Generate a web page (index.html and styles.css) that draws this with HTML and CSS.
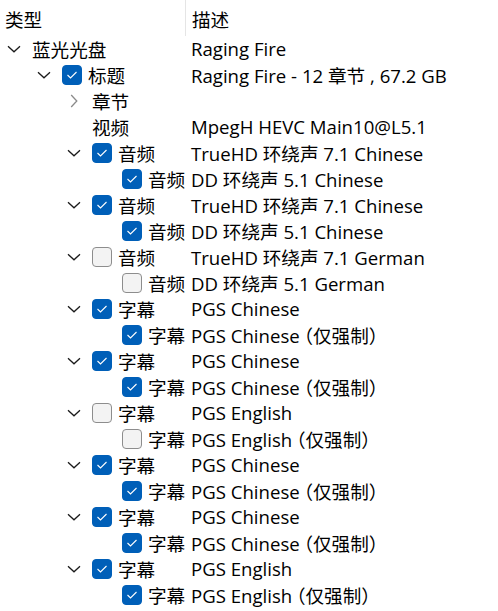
FILE: index.html
```html
<!DOCTYPE html>
<html lang="zh-CN">
<head>
<meta charset="utf-8">
<title>Tree</title>
<link rel="stylesheet" href="styles.css">
</head>
<body>
<div class="tree">
  <div class="header">
    <div class="col-type">类型</div>
    <div class="col-desc">描述</div>
  </div>

  <div class="row l0">
    <div class="col-type"><span class="exp"><svg width="14" height="8" viewBox="0 0 14 8"><path d="M1 1.2 L7 6.8 L13 1.2" fill="none" stroke="#1b1b1b" stroke-width="1.3"/></svg></span><span class="label">蓝光光盘</span></div>
    <div class="col-desc">Raging Fire</div>
  </div>

  <div class="row l1">
    <div class="col-type"><span class="exp"><svg width="14" height="8" viewBox="0 0 14 8"><path d="M1 1.2 L7 6.8 L13 1.2" fill="none" stroke="#1b1b1b" stroke-width="1.3"/></svg></span><span class="cb on"><svg width="12" height="10" viewBox="0 0 12 10"><path d="M1.5 5 L4.5 8 L10.5 2" fill="none" stroke="#fff" stroke-width="1.1"/></svg></span><span class="label">标题</span></div>
    <div class="col-desc">Raging Fire - 12 章节 , 67.2 GB</div>
  </div>

  <div class="row l2">
    <div class="col-type"><span class="exp"><svg width="8" height="14" viewBox="0 0 8 14"><path d="M1.2 1 L6.8 7 L1.2 13" fill="none" stroke="#8a8a8a" stroke-width="1.3"/></svg></span><span class="label">章节</span></div>
    <div class="col-desc"></div>
  </div>

  <div class="row l2">
    <div class="col-type"><span class="exp"></span><span class="label">视频</span></div>
    <div class="col-desc">MpegH HEVC Main10@L5.1</div>
  </div>

  <div class="row l2">
    <div class="col-type"><span class="exp"><svg width="14" height="8" viewBox="0 0 14 8"><path d="M1 1.2 L7 6.8 L13 1.2" fill="none" stroke="#1b1b1b" stroke-width="1.3"/></svg></span><span class="cb on"><svg width="12" height="10" viewBox="0 0 12 10"><path d="M1.5 5 L4.5 8 L10.5 2" fill="none" stroke="#fff" stroke-width="1.1"/></svg></span><span class="label">音频</span></div>
    <div class="col-desc">TrueHD 环绕声 7.1 Chinese</div>
  </div>
  <div class="row l3">
    <div class="col-type"><span class="cb on"><svg width="12" height="10" viewBox="0 0 12 10"><path d="M1.5 5 L4.5 8 L10.5 2" fill="none" stroke="#fff" stroke-width="1.1"/></svg></span><span class="label">音频</span></div>
    <div class="col-desc">DD 环绕声 5.1 Chinese</div>
  </div>

  <div class="row l2">
    <div class="col-type"><span class="exp"><svg width="14" height="8" viewBox="0 0 14 8"><path d="M1 1.2 L7 6.8 L13 1.2" fill="none" stroke="#1b1b1b" stroke-width="1.3"/></svg></span><span class="cb on"><svg width="12" height="10" viewBox="0 0 12 10"><path d="M1.5 5 L4.5 8 L10.5 2" fill="none" stroke="#fff" stroke-width="1.1"/></svg></span><span class="label">音频</span></div>
    <div class="col-desc">TrueHD 环绕声 7.1 Chinese</div>
  </div>
  <div class="row l3">
    <div class="col-type"><span class="cb on"><svg width="12" height="10" viewBox="0 0 12 10"><path d="M1.5 5 L4.5 8 L10.5 2" fill="none" stroke="#fff" stroke-width="1.1"/></svg></span><span class="label">音频</span></div>
    <div class="col-desc">DD 环绕声 5.1 Chinese</div>
  </div>

  <div class="row l2">
    <div class="col-type"><span class="exp"><svg width="14" height="8" viewBox="0 0 14 8"><path d="M1 1.2 L7 6.8 L13 1.2" fill="none" stroke="#1b1b1b" stroke-width="1.3"/></svg></span><span class="cb"></span><span class="label">音频</span></div>
    <div class="col-desc">TrueHD 环绕声 7.1 German</div>
  </div>
  <div class="row l3">
    <div class="col-type"><span class="cb"></span><span class="label">音频</span></div>
    <div class="col-desc">DD 环绕声 5.1 German</div>
  </div>

  <div class="row l2">
    <div class="col-type"><span class="exp"><svg width="14" height="8" viewBox="0 0 14 8"><path d="M1 1.2 L7 6.8 L13 1.2" fill="none" stroke="#1b1b1b" stroke-width="1.3"/></svg></span><span class="cb on"><svg width="12" height="10" viewBox="0 0 12 10"><path d="M1.5 5 L4.5 8 L10.5 2" fill="none" stroke="#fff" stroke-width="1.1"/></svg></span><span class="label">字幕</span></div>
    <div class="col-desc">PGS Chinese</div>
  </div>
  <div class="row l3">
    <div class="col-type"><span class="cb on"><svg width="12" height="10" viewBox="0 0 12 10"><path d="M1.5 5 L4.5 8 L10.5 2" fill="none" stroke="#fff" stroke-width="1.1"/></svg></span><span class="label">字幕</span></div>
    <div class="col-desc">PGS Chinese<span class="note">（仅强制）</span></div>
  </div>

  <div class="row l2">
    <div class="col-type"><span class="exp"><svg width="14" height="8" viewBox="0 0 14 8"><path d="M1 1.2 L7 6.8 L13 1.2" fill="none" stroke="#1b1b1b" stroke-width="1.3"/></svg></span><span class="cb on"><svg width="12" height="10" viewBox="0 0 12 10"><path d="M1.5 5 L4.5 8 L10.5 2" fill="none" stroke="#fff" stroke-width="1.1"/></svg></span><span class="label">字幕</span></div>
    <div class="col-desc">PGS Chinese</div>
  </div>
  <div class="row l3">
    <div class="col-type"><span class="cb on"><svg width="12" height="10" viewBox="0 0 12 10"><path d="M1.5 5 L4.5 8 L10.5 2" fill="none" stroke="#fff" stroke-width="1.1"/></svg></span><span class="label">字幕</span></div>
    <div class="col-desc">PGS Chinese<span class="note">（仅强制）</span></div>
  </div>

  <div class="row l2">
    <div class="col-type"><span class="exp"><svg width="14" height="8" viewBox="0 0 14 8"><path d="M1 1.2 L7 6.8 L13 1.2" fill="none" stroke="#1b1b1b" stroke-width="1.3"/></svg></span><span class="cb"></span><span class="label">字幕</span></div>
    <div class="col-desc">PGS English</div>
  </div>
  <div class="row l3">
    <div class="col-type"><span class="cb"></span><span class="label">字幕</span></div>
    <div class="col-desc">PGS English<span class="note">（仅强制）</span></div>
  </div>

  <div class="row l2">
    <div class="col-type"><span class="exp"><svg width="14" height="8" viewBox="0 0 14 8"><path d="M1 1.2 L7 6.8 L13 1.2" fill="none" stroke="#1b1b1b" stroke-width="1.3"/></svg></span><span class="cb on"><svg width="12" height="10" viewBox="0 0 12 10"><path d="M1.5 5 L4.5 8 L10.5 2" fill="none" stroke="#fff" stroke-width="1.1"/></svg></span><span class="label">字幕</span></div>
    <div class="col-desc">PGS Chinese</div>
  </div>
  <div class="row l3">
    <div class="col-type"><span class="cb on"><svg width="12" height="10" viewBox="0 0 12 10"><path d="M1.5 5 L4.5 8 L10.5 2" fill="none" stroke="#fff" stroke-width="1.1"/></svg></span><span class="label">字幕</span></div>
    <div class="col-desc">PGS Chinese<span class="note">（仅强制）</span></div>
  </div>

  <div class="row l2">
    <div class="col-type"><span class="exp"><svg width="14" height="8" viewBox="0 0 14 8"><path d="M1 1.2 L7 6.8 L13 1.2" fill="none" stroke="#1b1b1b" stroke-width="1.3"/></svg></span><span class="cb on"><svg width="12" height="10" viewBox="0 0 12 10"><path d="M1.5 5 L4.5 8 L10.5 2" fill="none" stroke="#fff" stroke-width="1.1"/></svg></span><span class="label">字幕</span></div>
    <div class="col-desc">PGS Chinese</div>
  </div>
  <div class="row l3">
    <div class="col-type"><span class="cb on"><svg width="12" height="10" viewBox="0 0 12 10"><path d="M1.5 5 L4.5 8 L10.5 2" fill="none" stroke="#fff" stroke-width="1.1"/></svg></span><span class="label">字幕</span></div>
    <div class="col-desc">PGS Chinese<span class="note">（仅强制）</span></div>
  </div>

  <div class="row l2">
    <div class="col-type"><span class="exp"><svg width="14" height="8" viewBox="0 0 14 8"><path d="M1 1.2 L7 6.8 L13 1.2" fill="none" stroke="#1b1b1b" stroke-width="1.3"/></svg></span><span class="cb on"><svg width="12" height="10" viewBox="0 0 12 10"><path d="M1.5 5 L4.5 8 L10.5 2" fill="none" stroke="#fff" stroke-width="1.1"/></svg></span><span class="label">字幕</span></div>
    <div class="col-desc">PGS English</div>
  </div>
  <div class="row l3">
    <div class="col-type"><span class="cb on"><svg width="12" height="10" viewBox="0 0 12 10"><path d="M1.5 5 L4.5 8 L10.5 2" fill="none" stroke="#fff" stroke-width="1.1"/></svg></span><span class="label">字幕</span></div>
    <div class="col-desc">PGS English<span class="note">（仅强制）</span></div>
  </div>
</div>
</body>
</html>
```

FILE: styles.css
```css
html, body {
  margin: 0;
  padding: 0;
  background: #ffffff;
}

body {
  font-family: "Open Sans", "Noto Sans CJK SC", sans-serif;
  font-size: 18.6px;
  color: #000000;
}

.tree {
  display: flex;
  flex-direction: column;
}

.header {
  display: flex;
  height: 36px;
  align-items: stretch;
}

.header .col-type {
  width: 186px;
  box-sizing: border-box;
  padding-left: 5px;
  display: flex;
  align-items: center;
  border-right: 1px solid #e5e5e5;
}

.header .col-desc {
  padding-left: 6px;
  display: flex;
  align-items: center;
}

.row {
  display: flex;
  height: 26px;
  align-items: center;
}

.row .col-type {
  width: 191px;
  flex: none;
  display: flex;
  align-items: center;
  box-sizing: border-box;
  white-space: nowrap;
  overflow: hidden;
}

.row .col-desc {
  white-space: nowrap;
  position: relative;
  top: -1px;
}

.label {
  position: relative;
  top: -1px;
}

.note {
  font-feature-settings: "halt";
  margin-left: 4px;
  letter-spacing: 0;
}

.l0 .col-type { padding-left: 0; }
.l1 .col-type { padding-left: 30px; }
.l2 .col-type { padding-left: 60px; }
.l3 .col-type { padding-left: 90px; }

.exp {
  width: 27px;
  margin-right: 5px;
  flex: none;
  display: flex;
  justify-content: center;
  align-items: center;
}

.exp svg {
  display: block;
}

.cb {
  width: 20px;
  height: 20px;
  box-sizing: border-box;
  border-radius: 4px;
  border: 1px solid #8d8d8d;
  background: #f3f3f3;
  flex: none;
  margin-right: 6px;
  display: flex;
  align-items: center;
  justify-content: center;
}

.l3 .cb {
  margin-left: 32px;
}

.cb.on {
  background: #005fb8;
  border-color: #005fb8;
}

.cb svg {
  display: block;
}
```
